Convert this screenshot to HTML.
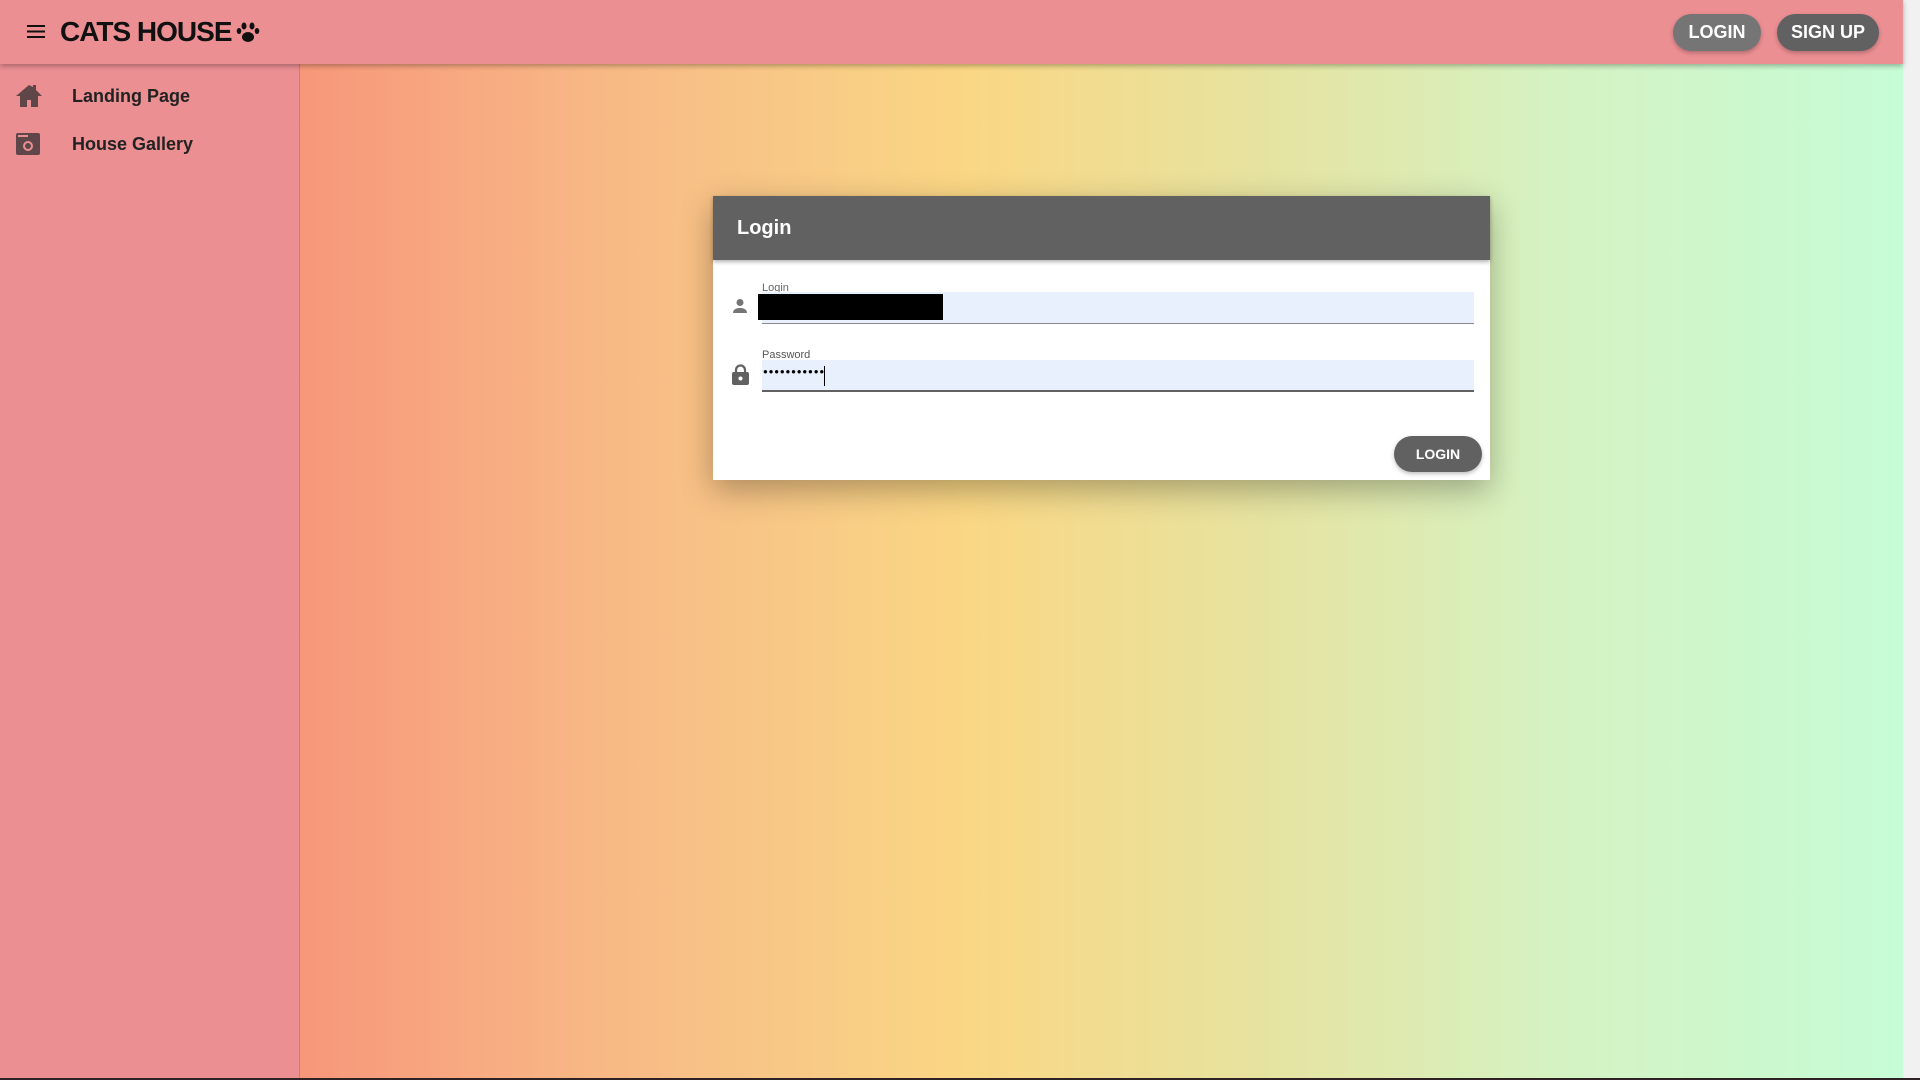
<!DOCTYPE html>
<html><head><meta charset="utf-8"><style>
*{box-sizing:border-box;margin:0;padding:0}
body{width:1920px;height:1080px;overflow:hidden;font-family:"Liberation Sans",sans-serif;position:relative;background:#eb8f93}
.main{position:absolute;left:300px;top:0;width:1603px;height:1078px;background:linear-gradient(90deg,#f7977a 0%,#f8b785 18%,#f8c886 30%,#fad784 41.6%,#e6e3a0 60%,#d5f2c2 78%,#c6fcd6 100%)}
.side{position:absolute;left:0;top:0;width:300px;height:1078px;background:#eb8f93;border-right:1px solid #d4787c}
.top{position:absolute;left:0;top:0;width:1903px;height:64px;background:#eb8f93;box-shadow:0 2px 5px rgba(0,0,0,.3);z-index:2}
.scroll{position:absolute;right:0;top:0;width:17px;height:1080px;background:#f1f1f1}
.bottom{position:absolute;left:0;top:1078px;width:1920px;height:2px;background:#2e2224}
.title{position:absolute;left:60px;top:16px;font-size:28px;font-weight:bold;color:#111;letter-spacing:-1px}
.btn{position:absolute;top:14px;height:37px;border-radius:19px;color:#fff;font-weight:bold;font-size:18px;line-height:37px;text-align:center;box-shadow:0 2px 4px rgba(0,0,0,.25)}
.nav{position:absolute;left:72px;font-size:18px;color:#222;font-weight:bold}
.dlg{position:absolute;left:713px;top:196px;width:777px;height:284px;background:#fff;box-shadow:0 10px 30px rgba(0,0,0,.3);z-index:3}
.dh{height:64px;background:#616161;color:#fff;font-weight:bold;font-size:20px;line-height:64px;padding-left:24px;box-shadow:0 2px 4px rgba(0,0,0,.3)}
.lbl{position:absolute;left:49px;font-size:11px;color:#666}
.fld{position:absolute;left:49px;width:712px;height:32px;background:#e8f0fe}
</style></head><body>
<div class="main"></div>
<div class="side">
<svg style="position:absolute;left:15px;top:83px" width="28" height="26" viewBox="0 0 28 26"><path d="M14 2L1 13h4v11h7v-7h4v7h7V13h4L21 7V2h-3v2z" fill="#5e4649"/></svg>
<div class="nav" style="top:86px">Landing Page</div>
<svg style="position:absolute;left:16px;top:133px" width="24" height="22" viewBox="0 0 24 22"><rect x="0" y="0" width="24" height="22" rx="2" fill="#5e4649"/><rect x="2" y="2" width="10" height="2" fill="#eb8f93"/><circle cx="12" cy="13" r="5" fill="#eb8f93"/><circle cx="12" cy="13" r="3" fill="#5e4649"/></svg>
<div class="nav" style="top:134px">House Gallery</div>
</div>
<div class="top">
<svg style="position:absolute;left:27px;top:25px" width="18" height="13"><rect y="0" width="18" height="2" fill="#111"/><rect y="5.5" width="18" height="2" fill="#111"/><rect y="11" width="18" height="2" fill="#111"/></svg>
<div class="title">CATS HOUSE</div>
<svg style="position:absolute;left:236px;top:21px" width="24" height="22" viewBox="0 0 24 22"><ellipse cx="12" cy="16" rx="6" ry="5" fill="#111"/><ellipse cx="8" cy="5" rx="2.5" ry="3.5" fill="#111"/><ellipse cx="16" cy="5" rx="2.5" ry="3.5" fill="#111"/><ellipse cx="3" cy="10" rx="2.3" ry="3" fill="#111"/><ellipse cx="21" cy="10" rx="2.3" ry="3" fill="#111"/></svg>
<div class="btn" style="left:1673px;width:88px;background:#757575">LOGIN</div>
<div class="btn" style="left:1777px;width:102px;background:#616161">SIGN UP</div>
</div>
<div class="dlg">
<div class="dh">Login</div>
<svg style="position:absolute;left:19px;top:102px" width="16" height="16" viewBox="0 0 16 16"><circle cx="8" cy="4.5" r="3.5" fill="#757575"/><path d="M1 15c0-4 4-5 7-5s7 1 7 5z" fill="#757575"/></svg>
<div class="lbl" style="top:86px">Login</div>
<div class="fld" style="top:96px;border-bottom:1px solid #888"></div>
<div style="position:absolute;left:45px;top:98px;width:185px;height:26px;background:#000"></div>
<svg style="position:absolute;left:19px;top:168px" width="17" height="21" viewBox="0 0 17 21"><path d="M4 9V6a4.5 4.5 0 0 1 9 0v3" stroke="#616161" stroke-width="2.2" fill="none"/><rect x="0" y="8" width="17" height="13" rx="2" fill="#616161"/><circle cx="8.5" cy="14.5" r="2" fill="#fff"/></svg>
<div class="lbl" style="top:153px;color:#555">Password</div>
<div class="fld" style="top:164px;border-bottom:2px solid #616161"><span style="position:absolute;left:1px;top:7px;font-size:8px;letter-spacing:0.8px">●●●●●●●●●●●</span><span style="position:absolute;left:62px;top:6px;width:1px;height:20px;background:#000"></span></div>
<div class="btn" style="left:681px;top:240px;width:88px;height:36px;line-height:36px;font-size:14px;background:#616161">LOGIN</div>
</div>
<div class="scroll"></div>
<div class="bottom"></div>
</body></html>
